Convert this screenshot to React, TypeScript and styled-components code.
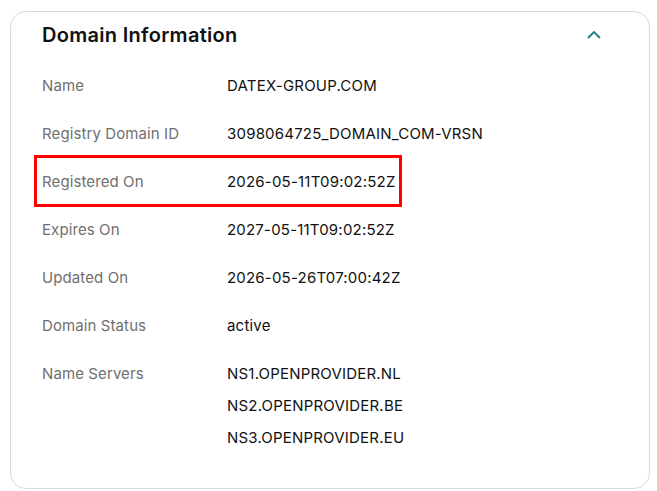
import React from "react";
import styled, { createGlobalStyle } from "styled-components";

const Global = createGlobalStyle`
  html, body { margin: 0; padding: 0; background: #ffffff; }
  body { font-family: Inter, "Noto Sans", sans-serif; }
`;

const Page = styled.div`
  padding: 11px 7px 3px 10px;
`;

const Card = styled.section`
  border: 1px solid #d7dbe0;
  border-radius: 16px;
  padding: 0 32px 26px 31px;
  background: #fff;
`;

const Header = styled.div`
  height: 46px;
  display: flex;
  align-items: center;
  justify-content: space-between;
  margin-bottom: 4px;
`;

const Title = styled.h2`
  margin: 0;
  font-size: 20px;
  font-weight: 600;
  color: #111111;
  letter-spacing: 0.3px;
`;

const Toggle = styled.button`
  border: 0;
  background: none;
  padding: 0;
  margin-right: 14px;
  width: 18px;
  height: 18px;
  display: flex;
  align-items: center;
  justify-content: center;
  color: #1b7e80;
  cursor: pointer;
`;

const Row = styled.div<{ $highlight?: boolean }>`
  position: relative;
  display: grid;
  grid-template-columns: 185px 1fr;
  padding: 14px 0;
  font-size: 15px;
  line-height: 20px;
  ${(p) =>
    p.$highlight &&
    `
    &::after {
      content: "";
      position: absolute;
      left: -8px;
      top: -3px;
      width: 368px;
      height: 52px;
      box-sizing: border-box;
      border: 3px solid #ff0000;
      pointer-events: none;
    }
  `}
`;

const Label = styled.div`
  color: #6f6f6f;
  letter-spacing: 0.1px;
`;

const Value = styled.div`
  color: #111111;
  letter-spacing: 0.2px;
  display: flex;
  flex-direction: column;
  gap: 12px;
`;

const rows: { label: string; values: string[]; highlight?: boolean }[] = [
  { label: "Name", values: ["DATEX-GROUP.COM"] },
  { label: "Registry Domain ID", values: ["3098064725_DOMAIN_COM-VRSN"] },
  { label: "Registered On", values: ["2026-05-11T09:02:52Z"], highlight: true },
  { label: "Expires On", values: ["2027-05-11T09:02:52Z"] },
  { label: "Updated On", values: ["2026-05-26T07:00:42Z"] },
  { label: "Domain Status", values: ["active"] },
  {
    label: "Name Servers",
    values: ["NS1.OPENPROVIDER.NL", "NS2.OPENPROVIDER.BE", "NS3.OPENPROVIDER.EU"],
  },
];

export default function App() {
  return (
    <Page>
      <Global />
      <Card>
        <Header>
          <Title>Domain Information</Title>
          <Toggle aria-label="Collapse">
            <svg width="16" height="10" viewBox="0 0 16 10" fill="none">
              <path d="M2 8 L8 2 L14 8" stroke="currentColor" strokeWidth="1.8" />
            </svg>
          </Toggle>
        </Header>
        {rows.map((r) => (
          <Row key={r.label} $highlight={r.highlight}>
            <Label>{r.label}</Label>
            <Value>
              {r.values.map((v) => (
                <span key={v}>{v}</span>
              ))}
            </Value>
          </Row>
        ))}
      </Card>
    </Page>
  );
}
